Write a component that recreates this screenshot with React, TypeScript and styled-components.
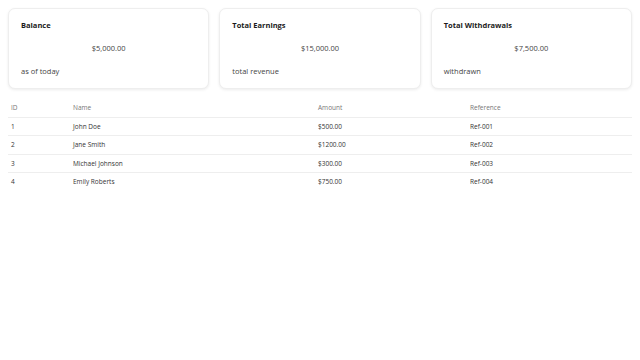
import React from "react";
import styled, { createGlobalStyle } from "styled-components";

const GlobalStyle = createGlobalStyle`
  html, body {
    margin: 0;
    padding: 0;
    background: #fff;
  }
  body {
    font-family: "Open Sans", "Noto Sans", sans-serif;
    color: #333;
  }
`;

const Page = styled.div`
  padding: 8px;
  display: flex;
  flex-direction: column;
  gap: 8px;
`;

const CardRow = styled.div`
  display: grid;
  grid-template-columns: repeat(3, 1fr);
  gap: 10px;
`;

const Card = styled.div`
  background: #fff;
  border: 1px solid #eeeeee;
  border-radius: 7px;
  box-shadow: 0 1px 3px rgba(0, 0, 0, 0.08);
  padding: 11px 12px 12px;
  height: 81px;
  box-sizing: border-box;
  display: flex;
  flex-direction: column;
  justify-content: space-between;
`;

const CardTitle = styled.div`
  font-size: 7.5px;
  font-weight: 700;
  color: #1a1a1a;
`;

const CardAmount = styled.div`
  font-size: 7.5px;
  color: #444;
  text-align: center;
  margin-top: -1px;
`;

const CardNote = styled.div`
  font-size: 7.5px;
  color: #444;
`;

const Table = styled.table`
  width: 100%;
  border-collapse: collapse;
  font-size: 6.5px;
`;

const HeadCell = styled.th<{ $w?: number }>`
  text-align: left;
  font-weight: 400;
  color: #777;
  padding: 0 3px 5px;
  height: 20px;
  vertical-align: bottom;
  box-sizing: border-box;
  border-bottom: 1px solid #eee;
  width: ${(p) => (p.$w ? `${p.$w}px` : "auto")};
`;

const Row = styled.tr`
  &:not(:last-child) td {
    border-bottom: 1px solid #eee;
  }
`;

const Cell = styled.td`
  padding: 0 3px;
  height: 17.5px;
  color: #333;
`;

const cards = [
  { title: "Balance", amount: "$5,000.00", note: "as of today" },
  { title: "Total Earnings", amount: "$15,000.00", note: "total revenue" },
  { title: "Total Withdrawals", amount: "$7,500.00", note: "withdrawn" },
];

const rows = [
  { id: 1, name: "John Doe", amount: "$500.00", ref: "Ref-001" },
  { id: 2, name: "Jane Smith", amount: "$1200.00", ref: "Ref-002" },
  { id: 3, name: "Michael Johnson", amount: "$300.00", ref: "Ref-003" },
  { id: 4, name: "Emily Roberts", amount: "$750.00", ref: "Ref-004" },
];

const App: React.FC = () => {
  return (
    <>
      <GlobalStyle />
      <Page>
        <CardRow>
          {cards.map((c) => (
            <Card key={c.title}>
              <CardTitle>{c.title}</CardTitle>
              <CardAmount>{c.amount}</CardAmount>
              <CardNote>{c.note}</CardNote>
            </Card>
          ))}
        </CardRow>
        <Table>
          <thead>
            <tr>
              <HeadCell $w={62}>ID</HeadCell>
              <HeadCell $w={245}>Name</HeadCell>
              <HeadCell $w={152}>Amount</HeadCell>
              <HeadCell>Reference</HeadCell>
            </tr>
          </thead>
          <tbody>
            {rows.map((r) => (
              <Row key={r.id}>
                <Cell>{r.id}</Cell>
                <Cell>{r.name}</Cell>
                <Cell>{r.amount}</Cell>
                <Cell>{r.ref}</Cell>
              </Row>
            ))}
          </tbody>
        </Table>
      </Page>
    </>
  );
};

export default App;
